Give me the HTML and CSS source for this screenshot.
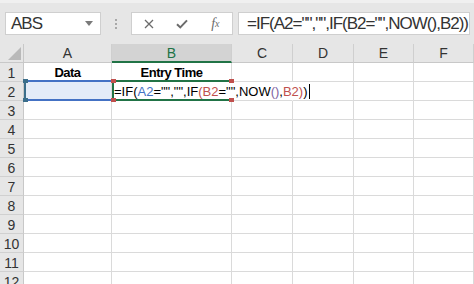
FILE: index.html
```html
<!DOCTYPE html>
<html lang="en">
<head>
    <meta charset="UTF-8">
    <title>Entry Time formula</title>
    <link rel="stylesheet" href="styles.css">
</head>
<body>
    <div class="toolbar">
        <div class="name-box">
            <span class="name-text">ABS</span>
            <svg class="drop" width="8" height="5" viewBox="0 0 8 5"><path d="M0 0 L8 0 L4 5 Z" fill="#7a7a7a"/></svg>
        </div>
        <div class="grip">
            <span></span><span></span><span></span>
        </div>
        <div class="fx-buttons">
            <div class="fx-btn">
                <svg width="10" height="10" viewBox="0 0 10 10"><path d="M1 1 L9 9 M9 1 L1 9" stroke="#6b6b6b" stroke-width="1.3" fill="none"/></svg>
            </div>
            <div class="fx-btn">
                <svg width="12" height="10" viewBox="0 0 12 10"><path d="M1 5.2 L4.3 8.4 L11 1.4" stroke="#6b6b6b" stroke-width="2" fill="none"/></svg>
            </div>
            <div class="fx-btn fx-label"><i>f</i><sub>x</sub></div>
        </div>
        <div class="formula-bar">=IF(A2="","",IF(B2="",NOW(),B2))</div>
    </div>

    <div class="sheet">
        <div class="corner"><svg width="13" height="13" viewBox="0 0 13 13"><path d="M13 0 L13 13 L0 13 Z" fill="#b9b9b9"/></svg></div>
        <div class="col-head">A</div>
        <div class="col-head active">B</div>
        <div class="col-head">C</div>
        <div class="col-head">D</div>
        <div class="col-head">E</div>
        <div class="col-head">F</div>

        <div class="row-head">1</div>
        <div class="cell bold">Data</div>
        <div class="cell bold">Entry Time</div>
        <div class="cell"></div>
        <div class="cell"></div>
        <div class="cell"></div>
        <div class="cell"></div>

        <div class="row-head">2</div>
        <div class="cell ref-a">
            <span class="handle blue tl"></span>
            <span class="handle blue bl"></span>
        </div>
        <div class="cell editing">
            <span class="handle red tl"></span>
            <span class="handle red bl"></span>
            <span class="handle red tr"></span>
            <span class="handle red br"></span>
            <span class="edit-text">=IF(<span class="c-blue">A2</span>="","",IF<span class="c-red">(B2</span>="",NOW<span class="c-purple">()</span>,<span class="c-red">B2)</span>)<span class="caret"></span></span>
        </div>
        <div class="cell no-right"></div>
        <div class="cell"></div>
        <div class="cell"></div>
        <div class="cell"></div>

        <div class="row-head">3</div><div class="cell"></div><div class="cell"></div><div class="cell"></div><div class="cell"></div><div class="cell"></div><div class="cell"></div>
        <div class="row-head">4</div><div class="cell"></div><div class="cell"></div><div class="cell"></div><div class="cell"></div><div class="cell"></div><div class="cell"></div>
        <div class="row-head">5</div><div class="cell"></div><div class="cell"></div><div class="cell"></div><div class="cell"></div><div class="cell"></div><div class="cell"></div>
        <div class="row-head">6</div><div class="cell"></div><div class="cell"></div><div class="cell"></div><div class="cell"></div><div class="cell"></div><div class="cell"></div>
        <div class="row-head">7</div><div class="cell"></div><div class="cell"></div><div class="cell"></div><div class="cell"></div><div class="cell"></div><div class="cell"></div>
        <div class="row-head">8</div><div class="cell"></div><div class="cell"></div><div class="cell"></div><div class="cell"></div><div class="cell"></div><div class="cell"></div>
        <div class="row-head">9</div><div class="cell"></div><div class="cell"></div><div class="cell"></div><div class="cell"></div><div class="cell"></div><div class="cell"></div>
        <div class="row-head">10</div><div class="cell"></div><div class="cell"></div><div class="cell"></div><div class="cell"></div><div class="cell"></div><div class="cell"></div>
        <div class="row-head">11</div><div class="cell"></div><div class="cell"></div><div class="cell"></div><div class="cell"></div><div class="cell"></div><div class="cell"></div>
        <div class="row-head">12</div><div class="cell"></div><div class="cell"></div><div class="cell"></div><div class="cell"></div><div class="cell"></div><div class="cell"></div>
    </div>
</body>
</html>
```

FILE: styles.css
```css
* {
    margin: 0;
    padding: 0;
    box-sizing: border-box;
}

body {
    width: 474px;
    height: 284px;
    overflow: hidden;
    background: #ffffff;
    font-family: 'Liberation Sans', Arial, sans-serif;
    color: #333;
}

/* formula bar */
.toolbar {
    height: 44px;
    background: #e6e6e6;
    border-top: 3px solid #f0f0f0;
    display: flex;
    align-items: flex-start;
    padding-top: 9px;
    padding-left: 5px;
}

.name-box {
    width: 96px;
    height: 23px;
    background: #fff;
    border: 1px solid #cfcfcf;
    display: flex;
    align-items: center;
    justify-content: space-between;
    padding: 0 7px 0 5px;
}

.name-text {
    font-size: 17px;
    letter-spacing: -1px;
    color: #333;
}

.drop {
    margin-top: -1px;
}

.grip {
    width: 30px;
    height: 23px;
    display: flex;
    flex-direction: column;
    align-items: center;
    justify-content: center;
    gap: 2px;
}

.grip span {
    width: 2px;
    height: 2px;
    background: #a8a8a8;
}

.fx-buttons {
    width: 102px;
    height: 23px;
    background: #fff;
    border: 1px solid #cfcfcf;
    display: flex;
}

.fx-btn {
    flex: 1;
    display: flex;
    align-items: center;
    justify-content: center;
}

.fx-label {
    font-family: 'Liberation Serif', 'Times New Roman', serif;
    color: #6b6b6b;
    font-size: 14px;
}

.fx-label sub {
    font-style: italic;
    font-size: 10px;
    vertical-align: -1px;
}

.formula-bar {
    margin-left: 5px;
    width: 232px;
    height: 23px;
    background: #fff;
    border: 1px solid #cfcfcf;
    font-size: 17px;
    letter-spacing: -1px;
    line-height: 21px;
    padding-left: 8px;
    white-space: nowrap;
    overflow: hidden;
    color: #333;
}

/* grid */
.sheet {
    display: grid;
    grid-template-columns: 24px 88px 120px 61px 61px 60px 60px;
    grid-auto-rows: 19px;
}

.corner {
    background: #e6e6e6;
    border-right: 1px solid #c8c8c8;
    border-bottom: 1px solid #c8c8c8;
    display: flex;
    align-items: flex-end;
    justify-content: flex-end;
    padding: 0 2px 2px 0;
}

.col-head {
    background: #e6e6e6;
    border-right: 1px solid #cfcfcf;
    border-bottom: 1px solid #c8c8c8;
    text-align: center;
    font-size: 14px;
    line-height: 19px;
    color: #333;
}

.col-head.active {
    background: #d3d3d3;
    color: #217346;
    border-bottom: 2px solid #217346;
}

.row-head {
    background: #e6e6e6;
    border-right: 1px solid #c8c8c8;
    border-bottom: 1px solid #d0d0d0;
    text-align: center;
    font-size: 14px;
    line-height: 18px;
    padding-top: 1px;
    color: #333;
}

.cell {
    position: relative;
    border-right: 1px solid #dadada;
    border-bottom: 1px solid #dadada;
    font-size: 13px;
    line-height: 18px;
    padding-top: 1px;
    color: #000;
}

.cell.bold {
    font-weight: bold;
    text-align: center;
    letter-spacing: -0.5px;
}

.cell.no-right {
    border-right-color: transparent;
}

.ref-a {
    background: #e4ecf8;
}

.ref-a::before {
    content: '';
    position: absolute;
    top: -2px;
    left: 0;
    right: -1px;
    bottom: -1px;
    border-top: 2px solid #4472c4;
    border-bottom: 2px solid #4472c4;
    border-left: 2px solid #3b6e8a;
}

.editing {
    z-index: 2;
    border-right-color: transparent;
    white-space: nowrap;
}

.editing::before {
    content: '';
    position: absolute;
    top: -2px;
    left: 0;
    right: 0;
    bottom: -1px;
    border-top: 2px solid #217346;
    border-bottom: 2px solid #217346;
    border-left: 2px solid #217346;
}

.edit-text {
    position: relative;
    padding-left: 2px;
    color: #000;
}

.c-blue { color: #4472c4; }
.c-red { color: #c0504d; }
.c-purple { color: #8064a2; }

.caret {
    display: inline-block;
    width: 1px;
    height: 15px;
    background: #000;
    margin-left: 1px;
    vertical-align: -3px;
}

.handle {
    position: absolute;
    width: 5px;
    height: 4px;
    z-index: 3;
}

.handle.blue { background: #3b6e8a; }
.handle.red { background: #c0504d; }

.handle.tl { top: -3px; left: -1px; }
.handle.bl { bottom: -2px; left: -1px; }
.handle.tr { top: -3px; right: -3px; }
.handle.br { bottom: -2px; right: -3px; }
```
